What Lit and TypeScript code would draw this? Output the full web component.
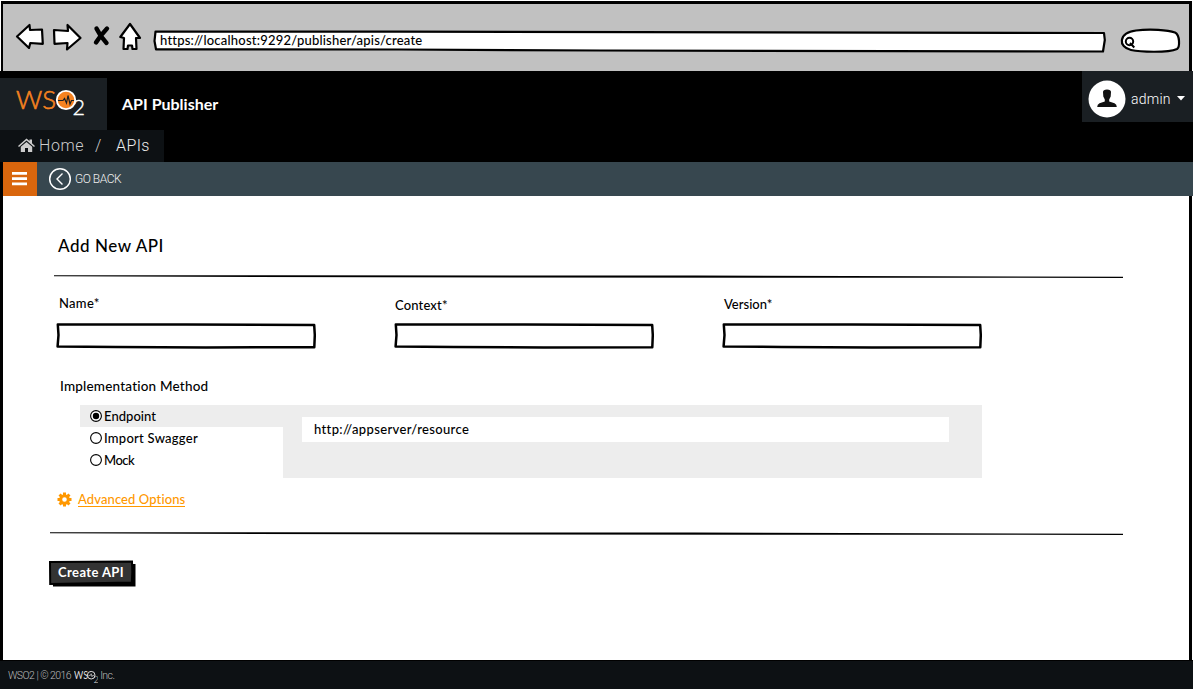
import { LitElement, html, css, svg } from "lit";
import { customElement, state } from "lit/decorators.js";

@customElement("sketch-field")
class SketchField extends LitElement {
  static styles = css`
    :host { display: block; width: 260px; }
    .label { height: 18px; line-height: 18px; padding-left: 2px; white-space: nowrap; }
    .box { display: block; margin-top: 10px; }
  `;
  render() {
    return html`
      <div class="label"><slot></slot></div>
      <svg class="box" width="260" height="27" viewBox="0 0 260 27">
        <path d="M1.8 1.5 L130 1.6 L258.2 2.1 L258.8 12 L258.3 24.2 L150 24.4 L60 24 L1.6 23.4 L2.5 12 Z" fill="#fff" stroke="#000" stroke-width="2.5" stroke-linejoin="round" />
      </svg>`;
  }
}

@customElement("app-root")
class AppRoot extends LitElement {
  @state() method = 0;

  static styles = css`
    :host { display: flex; flex-direction: column; width: 1193px; height: 689px; overflow: hidden; background: #fff; color: #000; font-family: Lato, "Noto Sans", sans-serif; font-size: 13px; font-weight: 500; }
    svg { display: block; flex: none; }
    .chrome, .head, .bar, .main, .foot { flex: none; }
    .chrome { height: 70px; box-sizing: border-box; border: solid #000; border-width: 3px 3px 0 2px; background: #c1c1c1; display: flex; margin: 1px 1px 0; }
    .nav { width: 149px; }
    .address { display: grid; width: 954px; height: 24px; margin-top: 26px; }
    .address > * { grid-area: 1 / 1; }
    .url { line-height: 20px; padding: 0 0 0 8px; white-space: nowrap; letter-spacing: .21px; }
    .search { margin: 22px 0 0 12px; }
    .head { height: 91px; background: #000; display: flex; }
    .left { width: 164px; padding-top: 7px; box-sizing: border-box; }
    .logo { width: 107px; height: 52px; background: #1a1f23; }
    .crumbs { height: 32px; background: #0d1114; display: flex; align-items: center; font: 300 16px/30px Roboto, sans-serif; color: #ccc; padding-left: 18px; box-sizing: border-box; }
    .house { margin-bottom: 2px; }
    .home { margin-left: 4px; width: 56px; letter-spacing: .55px; }
    .slash { width: 21px; }
    .here { color: #eee; letter-spacing: .4px; }
    .title { margin-left: -42px; padding-top: 23px; color: #fff; font-weight: 700; font-size: 16px; line-height: 20px; letter-spacing: 0; white-space: nowrap; }
    .user { margin-left: auto; width: 111px; height: 51px; background: #1a1f23; color: #fff; display: flex; align-items: center; font: 300 14px/20px Roboto, sans-serif; letter-spacing: .25px; padding: 4px 0 0 6px; box-sizing: border-box; }
    .name { width: 45px; margin-left: 5px; }
    .caret { margin-left: 1px; }
    .bar { height: 34px; display: flex; background: #37474f; border-left: 3px solid #000; box-sizing: border-box; }
    .menu { width: 34px; background: #d9660d; }
    .back { display: flex; align-items: center; padding-left: 11px; font: 300 12px/34px Roboto, sans-serif; color: #eee; letter-spacing: -.48px; }
    .back span { margin-left: 3px; }
    .main { height: 464px; border: solid #000; border-width: 0 3px 0 3px; margin-right: 1px; box-sizing: border-box; padding-left: 47px; }
    .h1 { padding: 39px 0 0 8px; font-size: 17px; line-height: 22px; letter-spacing: .55px; }
    .rule { margin: 18px 0 0 4px; }
    .fields { display: flex; padding: 16px 0 0 6px; }
    .f1 { width: 338px; letter-spacing: .3px; }
    .f2 { width: 328px; letter-spacing: .15px; }
    .fields span { display: block; }
    .f1 span { padding-left: 1px; line-height: 17px; }
    .f2 span { padding-top: 1px; margin-left: -1px; }
    .method { padding: 26px 0 0 10px; line-height: 20px; letter-spacing: .2px; font-size: 13.5px; }
    .impl { display: flex; margin: 9px 0 0 30px; height: 73px; }
    .options { width: 203px; }
    .option { height: 22px; display: flex; align-items: center; padding-left: 9px; letter-spacing: .05px; }
    .option:nth-child(2) { letter-spacing: .25px; }
    .option.on { background: #ededed; }
    .option:nth-child(3) { letter-spacing: -.5px; }
    .option span { margin-left: 1px; }
    .panel { width: 699px; background: #ededed; padding: 12px 33px 36px 19px; box-sizing: border-box; }
    .endpoint { background: #fff; height: 25px; line-height: 25px; padding-left: 12px; letter-spacing: .35px; }
    .advanced { display: flex; align-items: center; padding: 12px 0 0 7px; color: #ff9800; height: 19px; }
    .advanced span { margin-left: 6px; border-bottom: 1px solid #ff9800; line-height: 14px; letter-spacing: .1px; }
    .rule2 { margin-top: 23px; }
    .create { display: grid; width: 88px; height: 28px; margin: 24px 0 0 -2px; color: #fff; font-weight: 700; }
    .create > * { grid-area: 1 / 1; }
    .create span { padding-left: 10px; line-height: 25px; z-index: 1; letter-spacing: .4px; }
    .foot { height: 29px; box-sizing: border-box; background: #0d1114; border-top: 1px solid #000; color: #bbb; display: flex; padding: 2px 0 0 8px; font: 300 10.5px/26px Roboto, sans-serif; letter-spacing: -.55px; }
    .mark { margin: 6px 2px 0 3px; }
  `;

  rule(cls: string, w: number) {
    return html`<svg class=${cls} width=${w} height="4" viewBox="0 0 ${w} 4">
      <path d="M0 .2 L${w * 0.2} .2 L${w * 0.6} .6 L${w} 1.7 V2.9 L${w * 0.7} 2.7 L${w * 0.3} 2.3 L0 1.2 Z" /></svg>`;
  }

  render() {
    const options = ["Endpoint", "Import Swagger", "Mock"];
    return html`
      <div class="chrome">
        <svg class="nav" width="149" height="60" viewBox="3 4 149 60">
          <g fill="#fff" stroke="#000" stroke-width="2.2" stroke-linejoin="round">
            <path d="M17 36.5 L29.5 25 L30 30 L42 29.5 L42.8 43.8 L30.3 43 L29 48 Z" />
            <path d="M80.5 38 L67.5 25 L68 31 L54 30 L54.5 43.8 L67.5 43 L67 49.5 Z" />
            <path d="M130 24 L120.3 37 L124 38 L123.5 49 L127.5 49 L128 45.5 L132 45.5 L132.5 49 L136.5 49 L136 38 L140 38 Z" />
          </g>
          <path d="M96.5 28.5 Q100 36 106.5 43 M107 28.5 Q100 36 96 42.5" fill="none" stroke="#000" stroke-width="4.4" stroke-linecap="round" />
        </svg>
        <div class="address">
          <svg width="954" height="24" viewBox="152 30 954 24">
            <path d="M155.5 31.6 L400 31.6 L1104 33 L1104.8 40 L1103 51.5 L600 50.5 L400 49.5 L156 49.3 L154.5 41 Z" fill="#fff" stroke="#000" stroke-width="2.2" stroke-linejoin="round" />
          </svg>
          <span class="url">https://localhost:9292/publisher/apis/create</span>
        </div>
        <svg class="search" width="63" height="28" viewBox="1118 26 63 28">
          <path d="M1136 30.5 C1150 28.5 1168 30 1175 32.5 C1180 35 1180 47 1177 49 C1168 53 1140 52 1131 50 C1118 47 1118 33 1136 30.5 Z" fill="#fff" stroke="#000" stroke-width="2.2" />
          <g fill="none" stroke="#000" stroke-width="2"><circle cx="1129.5" cy="41.5" r="3.7" /><path d="M1130 43 L1134.3 47.5" /></g>
        </svg>
      </div>
      <div class="head">
        <div class="left">
          <svg class="logo" width="107" height="52" viewBox="0 78 107 52">
            <text x="16" y="109" fill="#f58220" font-family="Lato" font-size="26" font-weight="300" stroke="#f58220" stroke-width=".6" textLength="40" lengthAdjust="spacingAndGlyphs">WS</text>
            <circle cx="66" cy="100" r="9.2" fill="#f58220" stroke="#fff" stroke-width="1.8" />
            <path d="M58 100.5 H63 L64.5 98.5 L66.5 103 L68 95.5 L70 104 L71.5 100.5 H74" fill="none" stroke="#1a1f23" stroke-width="1.2" />
            <text x="72.5" y="115" fill="#fff" font-family="Lato" font-size="22" font-weight="300" stroke="#fff" stroke-width=".4" textLength="12.5" lengthAdjust="spacingAndGlyphs">2</text>
          </svg>
          <div class="crumbs">
            <svg class="house" width="17" height="15" viewBox="0 0 17 15" fill="#ccc"><path d="M0 8 L8.5 .5 L11.5 3 V1.5 H14 V5.3 L17 8 L16 9 L8.5 2.6 L1 9 Z M2.8 8.8 L8.5 4 L14.2 8.8 V14 H10 V10 H7 V14 H2.8 Z" /></svg>
            <span class="home">Home</span><span class="slash">/</span><span class="here">APIs</span>
          </div>
        </div>
        <div class="title">API Publisher</div>
        <div class="user">
          <svg width="38" height="38" viewBox="0 0 38 38"><circle cx="19" cy="19" r="18.5" fill="#fff" /><path d="M15 12 Q15 9.5 19 9.5 Q23 9.5 23 12 L22.7 16.5 L21.2 19.5 V21.5 L26.5 23.3 Q28.8 24.2 28.8 27 H9.2 Q9.2 24.2 11.5 23.3 L16.8 21.5 V19.5 L15.3 16.5 Z" fill="#111" /></svg>
          <span class="name">admin</span>
          <svg class="caret" width="8" height="5" viewBox="0 0 8 5"><path d="M0 0 H8 L4 4.5 Z" fill="#fff" /></svg>
        </div>
      </div>
      <div class="bar">
        <svg class="menu" width="34" height="34" viewBox="0 0 34 34" fill="#fff"><path d="M9 10 H24 V12.7 H9 Z M9 15.3 H24 V18 H9 Z M9 20.5 H24 V23.2 H9 Z" /></svg>
        <div class="back">
          <svg width="24" height="24" viewBox="0 0 24 24" fill="none" stroke="#fff"><circle cx="12" cy="12" r="10.3" stroke-width="1.5" /><path d="M14.5 6.5 L9 12 L14.5 17.5" stroke-width="1.4" /></svg>
          <span>GO BACK</span>
        </div>
      </div>
      <div class="main">
        <div class="h1">Add New API</div>
        ${this.rule("rule", 1069)}
        <div class="fields">
          <sketch-field class="f1"><span>Name*</span></sketch-field>
          <sketch-field class="f2"><span>Context*</span></sketch-field>
          <sketch-field class="f3"><span>Version*</span></sketch-field>
        </div>
        <div class="method">Implementation Method</div>
        <div class="impl">
          <div class="options">
            ${options.map((o, i) => html`<div class="option ${i === this.method ? "on" : ""}" @click=${() => (this.method = i)}>
              <svg width="14" height="14" viewBox="0 0 14 14"><circle cx="7" cy="7" r="5.4" fill="#fff" stroke="#000" stroke-width="1.1" />${i === this.method ? svg`<circle cx="7" cy="7" r="3.2" />` : ""}</svg>
              <span>${o}</span></div>`)}
          </div>
          <div class="panel"><div class="endpoint">http://appserver/resource</div></div>
        </div>
        <div class="advanced">
          <svg width="15" height="15" viewBox="-7.5 -7.5 15 15"><circle r="3.8" fill="none" stroke="#ff9800" stroke-width="3" />${[0, 45, 90, 135].map((a) => svg`<path transform="rotate(${a})" d="M-1.5 -7 H1.5 V-4 H-1.5 Z M-1.5 4 H1.5 V7 H-1.5 Z" fill="#ff9800" />`)}</svg>
          <span>Advanced Options</span>
        </div>
        ${this.rule("rule2", 1073)}
        <div class="create">
          <svg width="88" height="28" viewBox="0 0 88 28"><path d="M4 4 H87.5 V26.5 H5 Z" /><path d="M2 2 L84 1.6 L84.3 12 L83.8 22.5 L2.2 24 Z" fill="#333" stroke="#000" stroke-width="2" /></svg>
          <span>Create API</span>
        </div>
      </div>
      <div class="foot">
        <span>WSO2 | © 2016</span>
        <svg class="mark" width="24" height="16" viewBox="0 0 24 16" fill="#ddd" font-family="Lato">
          <text x="0" y="10" font-size="11.5" font-weight="400" letter-spacing="0" textLength="14" lengthAdjust="spacingAndGlyphs">WS</text><circle cx="17.2" cy="6.2" r="3.8" fill="none" stroke="#ddd" /><path d="M14.4 6.4 H16.4 L17.2 4.7 L18 7.7 L18.7 6.4 H20.2" fill="none" stroke="#ddd" stroke-width=".7" />
          <text x="19.5" y="13.5" font-size="9" letter-spacing="0">2</text>
        </svg>
        <span>Inc.</span>
      </div>`;
  }
}
